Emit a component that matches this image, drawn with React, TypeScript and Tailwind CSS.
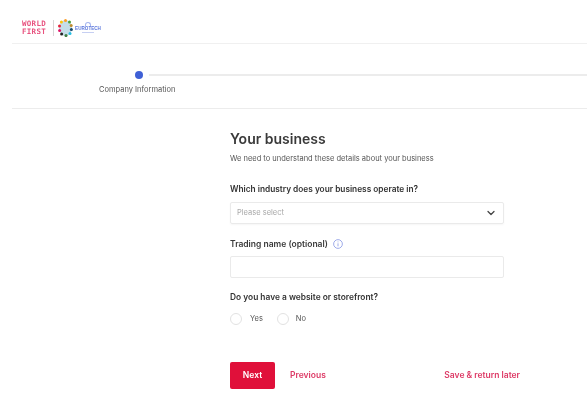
import { ChevronDown } from "lucide-react";

const emblemDots = [
  { cx: 7.5, cy: 1.5, c: "#fd9d24" }, { cx: 11.5, cy: 3, c: "#4c9f38" }, { cx: 13.2, cy: 6.5, c: "#bf8b2e" },
  { cx: 13.4, cy: 10.5, c: "#19486a" }, { cx: 12, cy: 14.5, c: "#26bde2" }, { cx: 8, cy: 16.6, c: "#3f7e44" },
  { cx: 3.6, cy: 15, c: "#222222" }, { cx: 1.6, cy: 11.5, c: "#dd1367" }, { cx: 1.5, cy: 7, c: "#e5243b" },
  { cx: 3.4, cy: 3, c: "#fcc30b" },
];

function Logo() {
  return (
    <div className="flex items-center">
      <div className="w-[28px] text-center font-['DejaVu_Sans_Mono',monospace] text-[7.5px] leading-[8px] font-bold tracking-[0.3px] text-[#e8527f]">
        <div>WORLD</div>
        <div>FIRST</div>
      </div>
      <div className="ml-[5px] h-[16px] w-px bg-[#d6d6d6]" />
      <svg viewBox="0 0 15 18" className="ml-[4px] h-[18px] w-[15px]">
        <ellipse cx="7.5" cy="9" rx="6.5" ry="8" fill="#c4dde8" />
        {emblemDots.map((d, i) => (
          <circle key={i} cx={d.cx} cy={d.cy} r="1.5" fill={d.c} />
        ))}
      </svg>
      <div className="ml-[2px] flex w-[26px] flex-col items-center">
        <div className="h-[4px] w-[6px] rounded-t-full border border-b-0 border-[#a5b5ee]" />
        <div className="font-['Liberation_Sans',sans-serif] text-[4.6px] leading-[5px] font-bold text-[#5a76dc]">
          EUROTECH
        </div>
        <div className="mt-[1px] h-px w-[12px] bg-[#c6cff2]" />
      </div>
    </div>
  );
}

export default function App() {
  return (
    <div className="h-[411px] w-[587px] overflow-hidden bg-white font-['Inter','Liberation_Sans',sans-serif] text-[#333333] blur-[0.5px]">
      <header className="ml-[12px] flex h-[44px] items-center border-b border-[#f0f0f0] pt-[12px] pl-[8px]">
        <Logo />
      </header>

      <div className="ml-[12px] h-[65px] border-b border-[#ececec] pt-[27px]">
        <div className="flex items-center pl-[123px]">
          <div className="h-[8px] w-[8px] rounded-full bg-[#3f60d6]" />
          <div className="ml-[6px] h-[2px] flex-1 bg-[#ececec]" />
        </div>
        <div className="mt-[5px] pl-[87px] text-[7.5px] leading-[12px] text-[#555555]">
          Company Information
        </div>
      </div>

      <main className="ml-[230px] w-[274px] pt-[21px]">
        <h1 className="text-[14px] leading-[18px] font-semibold text-[#3a3a3a]">Your business</h1>
        <p className="mt-[6px] text-[7.5px] leading-[10px] text-[#555555]">
          We need to understand these details about your business
        </p>

        <label className="mt-[19px] block text-[8.3px] leading-[12px] font-semibold text-[#333333]">
          Which industry does your business operate in?
        </label>
        <div className="mt-[7px] flex h-[22px] items-center justify-between rounded-[2px] border border-[#eaeaea] px-[6px] shadow-[0_1px_2px_rgba(0,0,0,0.04)]">
          <span className="text-[7.5px] text-[#a8a8a8]">Please select</span>
          <ChevronDown size={12} strokeWidth={2.5} className="text-[#444444]" />
        </div>

        <div className="mt-[14px] flex items-center">
          <label className="text-[8.5px] leading-[12px] font-semibold text-[#3a3a3a]">
            Trading name (optional)
          </label>
          <svg viewBox="0 0 12 12" className="ml-[5px] h-[10px] w-[10px] text-[#8b9be6]" fill="none" stroke="currentColor">
            <circle cx="6" cy="6" r="5.25" />
            <path d="M6 5.2v3.6M6 3v1" />
          </svg>
        </div>
        <div className="mt-[6px] h-[22px] rounded-[2px] border border-[#eaeaea]" />

        <label className="mt-[13px] block text-[8.4px] leading-[12px] font-semibold text-[#333333]">
          Do you have a website or storefront?
        </label>
        <div className="mt-[10px] flex items-center text-[7.5px] leading-[12px] text-[#555555]">
          <div className="h-[12px] w-[12px] rounded-full border border-[#e2e2e2]" />
          <span className="ml-[8px]">Yes</span>
          <div className="ml-[14px] h-[12px] w-[12px] rounded-full border border-[#e2e2e2]" />
          <span className="ml-[7px]">No</span>
        </div>

        <div className="mt-[37px] flex items-center text-[8.5px] font-semibold">
          <button className="h-[27px] w-[45px] rounded-[2px] bg-[#e0103a] text-white">Next</button>
          <span className="ml-[15px] text-[#dd3a66]">Previous</span>
          <span className="mr-[-16px] ml-auto text-[#dd3a66]">Save &amp; return later</span>
        </div>
      </main>
    </div>
  );
}
